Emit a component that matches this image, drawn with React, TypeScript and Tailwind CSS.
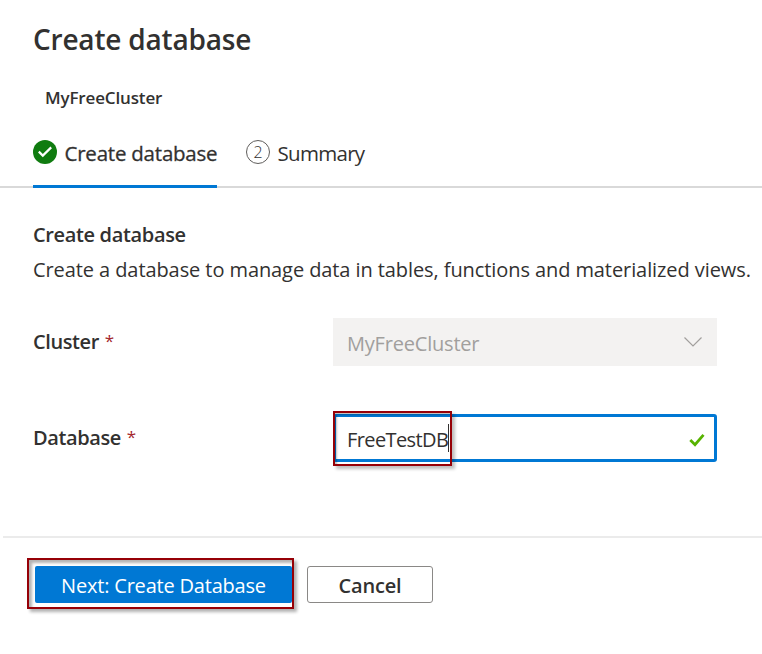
function Required() {
  return <span className="ml-[1px] align-[2px] text-[17px] leading-none font-normal text-[#a4262c]">*</span>;
}

export default function App() {
  return (
    <main className="flex h-[654px] w-[762px] flex-col overflow-hidden bg-white font-['Open_Sans','Noto_Sans',sans-serif] text-[20px] whitespace-nowrap text-[#323130]">
      <header className="h-[132px] pt-[19px]">
        <h1 className="ml-[33px] text-[28px] leading-[40px] font-semibold tracking-[-0.2px]">Create database</h1>
        <p className="mt-[27px] ml-[45px] text-[17px] leading-[24px] font-semibold tracking-[-0.15px]">MyFreeCluster</p>
      </header>

      <nav className="flex h-[56px] border-b-2 border-[#d9d9d9] pl-[33px]">
        <button className="flex h-[56px] w-[184px] shrink-0 items-start border-b-[3px] border-[#0078d4] pt-[8px]">
          <svg width="24" height="24" viewBox="0 0 24 24" className="shrink-0">
            <circle cx="12" cy="12" r="12" fill="#107c10" />
            <path d="m5.8 11.6 4 4 8.4-8.2" fill="none" stroke="white" strokeWidth="2.2" />
          </svg>
          <span className="ml-[7.5px] text-[20.5px] leading-[26px] font-medium tracking-[-0.22px] [-webkit-text-stroke:0.3px]">Create database</span>
        </button>
        <button className="ml-[29px] flex h-[54px] items-start pt-[8px]">
          <span className="flex size-[24px] items-center justify-center rounded-full border border-[#605e5c] text-[16px] leading-[24px] font-light">2</span>
          <span className="ml-[7.5px] text-[20.5px] leading-[26px] tracking-[-0.7px]">Summary</span>
        </button>
      </nav>

      <section className="h-[348px] pt-[33px] pl-[33px]">
        <h2 className="text-[20px] leading-[28px] font-semibold tracking-[-0.35px]">Create database</h2>
        <p className="mt-[7px] text-[20px] leading-[28px] tracking-[-0.085px]">Create a database to manage data in tables, functions and materialized views.</p>

        <div className="mt-[34px] flex h-[48px] items-center">
          <label className="w-[300px] font-semibold tracking-[-0.4px]">Cluster <Required /></label>
          <div className="flex h-[48px] w-[384px] items-center justify-between bg-[#f3f2f1] pr-[14px] pl-[14px] text-[#a19f9d]">
            <span className="pt-[3px] tracking-[-0.2px]">MyFreeCluster</span>
            <svg width="20" height="12" viewBox="0 0 20 12" fill="none" stroke="#a19f9d" strokeWidth="1.2">
              <path d="m1.5 1.5 8.5 8.5 8.5-8.5" />
            </svg>
          </div>
        </div>

        <div className="mt-[48px] flex h-[48px] items-center">
          <label className="w-[300px] font-semibold tracking-[-0.4px]">Database <Required /></label>
          <div className="relative flex h-[48px] w-[384px] items-center justify-between rounded-[3px] border-[3px] border-[#0078d4] pr-[9px] pl-[11px]">
            <span className="flex items-center">
              <span className="pt-[3px] tracking-[-0.6px]">FreeTestDB</span>
              <span className="h-[28px] w-px bg-[#323130]" />
            </span>
            <svg width="16" height="14" viewBox="0 0 16 14" fill="none" stroke="#57b300" strokeWidth="2.8" className="mt-[3px]">
              <path d="m1.3 7 4.7 4.7L14.5 1.8" />
            </svg>
            <span className="absolute -top-[6px] -left-[3px] h-[55px] w-[119px] border-2 border-[#960007] shadow-[3px_3px_3px_rgba(0,0,0,0.25),inset_2px_2px_2px_rgba(0,0,0,0.25)]" />
          </div>
        </div>
      </section>

      <footer className="ml-[3px] flex border-t-2 border-[#ebebeb] pt-[20px] pl-[24px]">
        <div className="flex h-[51px] w-[267px] border-2 border-[#960007] pt-[6px] pl-[6px] shadow-[3px_3px_3px_rgba(0,0,0,0.3),inset_3px_3px_3px_rgba(0,0,0,0.3)]">
          <button className="h-[37px] w-[257px] rounded-[2px] bg-[#0078d4] pt-[2px] text-[20px] tracking-[-0.2px] text-white">Next: Create Database</button>
        </div>
        <button className="mt-[8px] ml-[13px] h-[37px] w-[126px] rounded-[3px] border border-[#8a8886] pt-[2px] text-[20px] font-semibold tracking-[-0.2px]">Cancel</button>
      </footer>
    </main>
  );
}
